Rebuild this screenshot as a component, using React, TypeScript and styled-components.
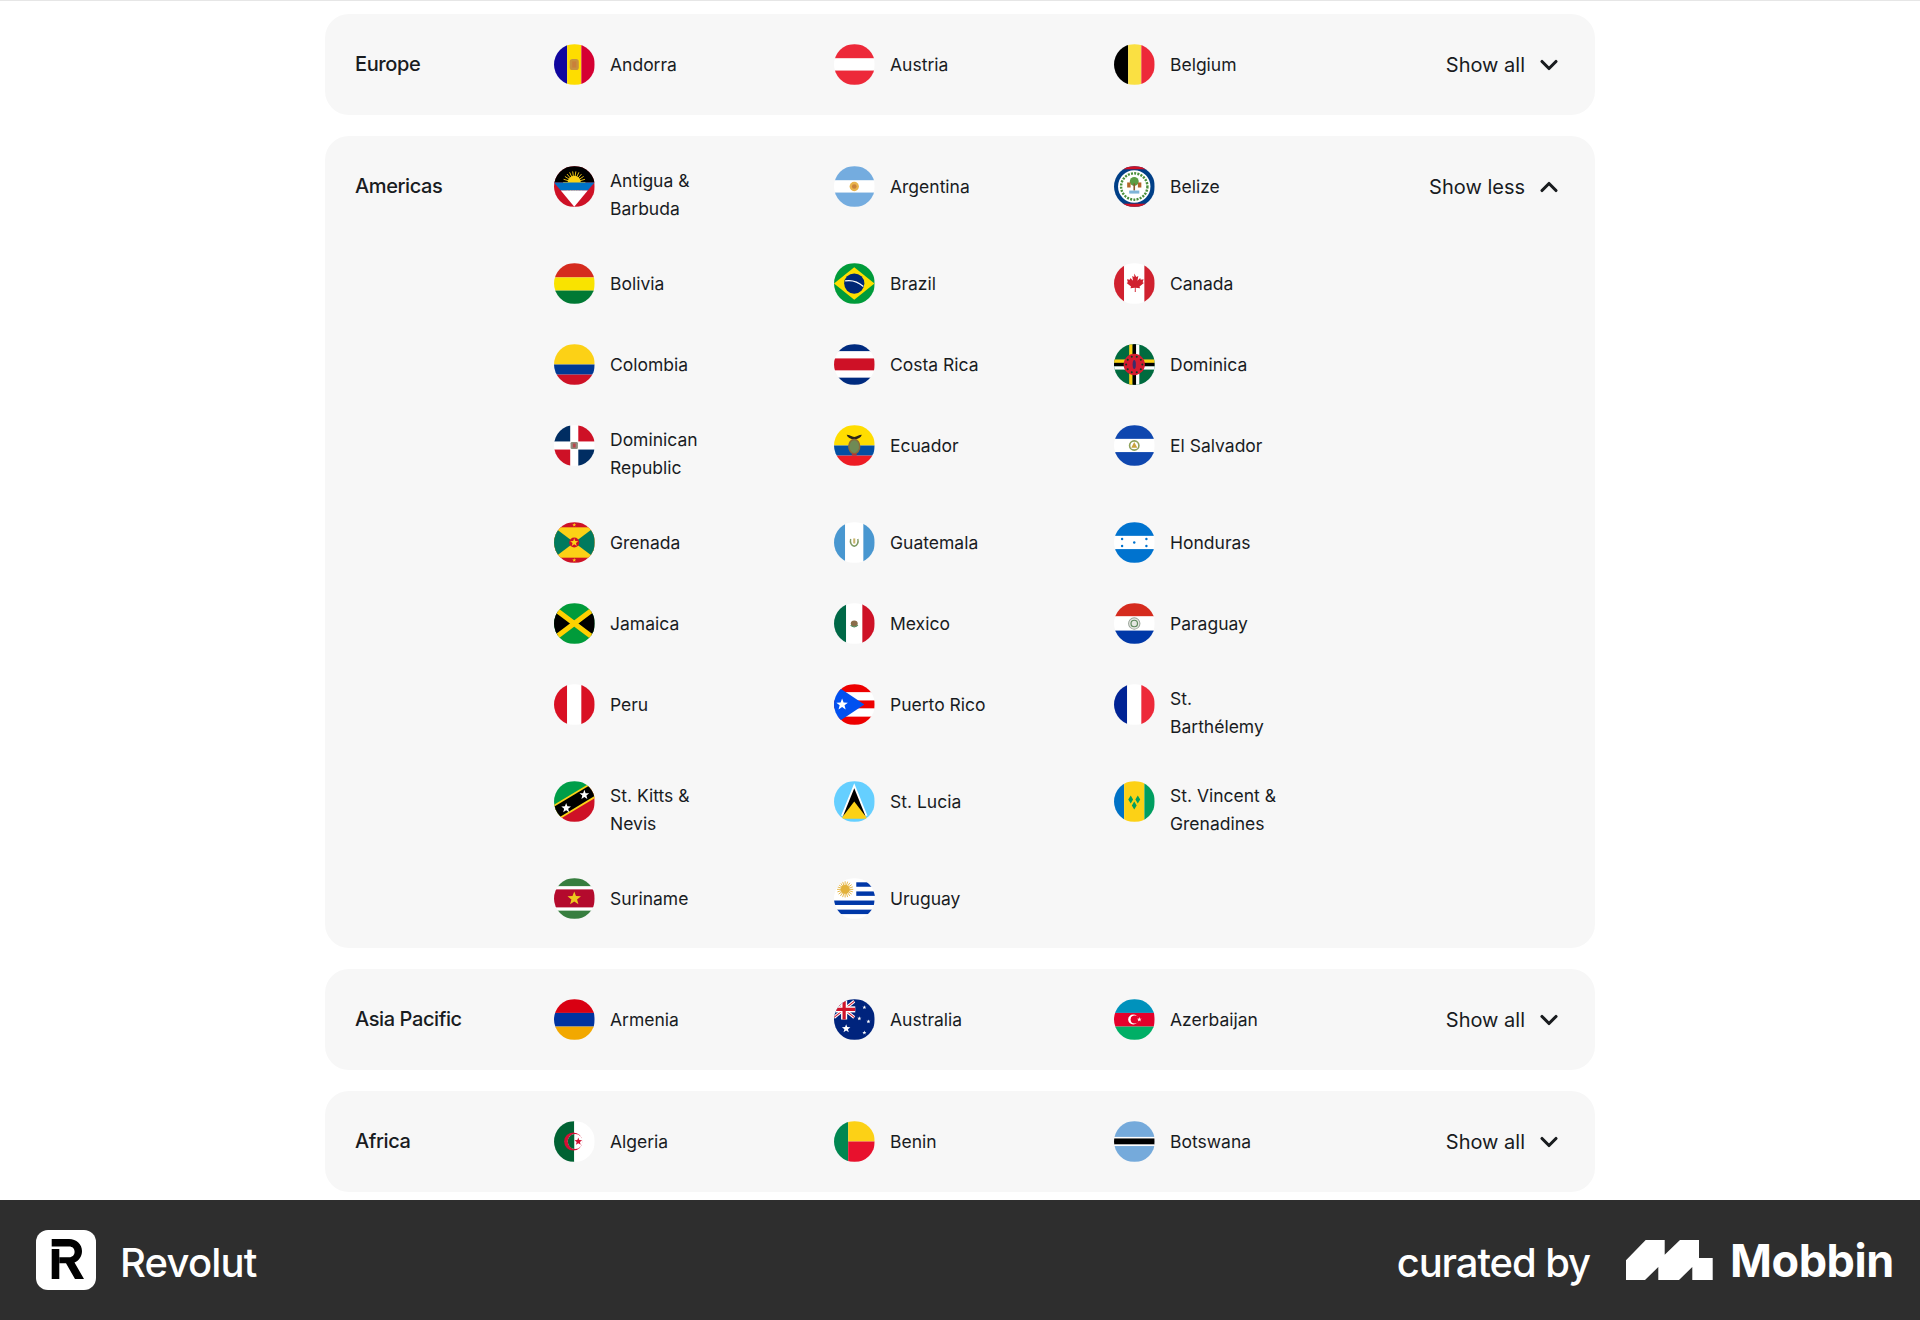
import React from "react";
import styled, { createGlobalStyle } from "styled-components";
import { ChevronDown, ChevronUp } from "lucide-react";

const star = (cx: number, cy: number, r: number, fill: string, inner = 0.42) => {
  const pts = Array.from({ length: 10 }).map((_, i) => {
    const a = (Math.PI / 5) * i - Math.PI / 2;
    const d = i % 2 === 0 ? r : r * inner;
    return `${(cx + Math.cos(a) * d).toFixed(2)},${(cy + Math.sin(a) * d).toFixed(2)}`;
  });
  return <polygon points={pts.join(" ")} fill={fill} />;
};

// stripes as [colour, size] pairs, sizes add up to 40
const hs = (list: [string, number][]) => {
  let y = 0;
  return list.map(([c, s], i) => {
    const r = <rect key={i} x="0" y={y} width="40" height={s} fill={c} />;
    y += s;
    return r;
  });
};
const vs = (list: [string, number][]) => {
  let x = 0;
  return list.map(([c, s], i) => {
    const r = <rect key={i} x={x} y="0" width={s} height="40" fill={c} />;
    x += s;
    return r;
  });
};

const sunRays = (cx: number, cy: number, r: number, fill: string, n = 16) =>
  Array.from({ length: n }).map((_, i) => {
    const a = ((Math.PI * 2) / n) * i;
    return (
      <line
        key={i}
        x1={cx}
        y1={cy}
        x2={cx + Math.cos(a) * r}
        y2={cy + Math.sin(a) * r}
        stroke={fill}
        strokeWidth="0.9"
      />
    );
  });

const FLAGS: Record<string, React.ReactNode> = {
  Andorra: (
    <>
      {vs([["#10069f", 13], ["#fedd00", 14], ["#d50032", 13]])}
      <rect x="15.5" y="14.5" width="9" height="11" rx="2.8" fill="#c7913f" />
      <rect x="18" y="17" width="4" height="6" fill="#c9803a" />
    </>
  ),
  Austria: hs([["#ed2939", 14], ["#fff", 12], ["#ed2939", 14]]),
  Belgium: vs([["#000", 14], ["#fae042", 13], ["#ed2939", 13]]),
  "Antigua & Barbuda": (
    <>
      <rect width="40" height="40" fill="#ce1126" />
      <rect width="40" height="16" fill="#000" />
      {sunRays(20, 16, 11, "#fcd116", 22)}
      <circle cx="20" cy="16" r="6.5" fill="#fcd116" />
      <polygon points="0,16 40,16 33.3,24 6.7,24" fill="#0072c6" />
      <polygon points="6.7,24 33.3,24 20,40" fill="#fff" />
    </>
  ),
  Argentina: (
    <>
      {hs([["#74acdf", 14], ["#fff", 12], ["#74acdf", 14]])}
      <circle cx="20" cy="20" r="4.6" fill="#e9b44c" />
      <circle cx="20" cy="20" r="2.3" fill="#c9833a" />
    </>
  ),
  Belize: (
    <>
      <rect width="40" height="40" fill="#003f87" />
      <rect width="40" height="3" fill="#ce1126" />
      <rect y="37" width="40" height="3" fill="#ce1126" />
      <circle cx="20" cy="20" r="16" fill="#fff" />
      <circle cx="20" cy="20" r="13" fill="none" stroke="#4b8f3c" strokeWidth="2.4" strokeDasharray="2 1.2" />
      <circle cx="20" cy="15" r="4.4" fill="#5c9e45" />
      <rect x="19.2" y="17" width="1.6" height="7" fill="#8a5a2b" />
      <rect x="13" y="16" width="3.4" height="5" fill="#b5652b" />
      <rect x="23.6" y="16" width="3.4" height="5" fill="#b5652b" />
      <rect x="15" y="24" width="10" height="3" fill="#7fb5d9" />
    </>
  ),
  Bolivia: hs([["#d52b1e", 14], ["#f9e300", 13], ["#007934", 13]]),
  Brazil: (
    <>
      <rect width="40" height="40" fill="#009b3a" />
      <polygon points="20,4 40,20 20,36 0,20" fill="#fedf00" />
      <circle cx="20" cy="20" r="10" fill="#002776" />
      <path d="M11 17.5C17 16.5 24 18.5 29 23" fill="none" stroke="#fff" strokeWidth="1.2" />
    </>
  ),
  Canada: (
    <>
      {vs([["#d0212f", 10], ["#fff", 20], ["#d0212f", 10]])}
      <path
        d="M20 10l2 3.6 2-1-.8 4.6 2.6-2.6.6 1.6 2.8-.5-.9 3 1.2.7-4.3 3.6.5 1.6-4.3-.5.1 4.3h-1l.1-4.3-4.3.5.5-1.6-4.3-3.6 1.2-.7-.9-3 2.8.5.6-1.6 2.6 2.6-.8-4.6 2 1z"
        fill="#d0212f"
      />
    </>
  ),
  Colombia: hs([["#fcd116", 20], ["#003893", 10], ["#ce1126", 10]]),
  "Costa Rica": hs([["#002b7f", 7], ["#fff", 7], ["#ce1126", 12], ["#fff", 7], ["#002b7f", 7]]),
  Dominica: (
    <>
      <rect width="40" height="40" fill="#006b3f" />
      {vs([["transparent", 15], ["#fcd116", 3.4], ["#000", 3.4], ["#fff", 3.2]])}
      {hs([["transparent", 15], ["#fcd116", 3.4], ["#000", 3.4], ["#fff", 3.2]])}
      <circle cx="20" cy="20" r="10.5" fill="#d41c30" />
      {Array.from({ length: 10 }).map((_, i) => {
        const a = (Math.PI / 5) * i;
        return <circle key={i} cx={20 + Math.cos(a) * 8} cy={20 + Math.sin(a) * 8} r="1" fill="#0b3b24" />;
      })}
      <ellipse cx="20" cy="20" rx="1.6" ry="4.5" fill="#3a2d6b" />
    </>
  ),
  "Dominican Republic": (
    <>
      <rect width="40" height="40" fill="#fff" />
      <rect width="16" height="16" fill="#002d62" />
      <rect x="24" width="16" height="16" fill="#ce1126" />
      <rect y="24" width="16" height="16" fill="#ce1126" />
      <rect x="24" y="24" width="16" height="16" fill="#002d62" />
      <rect x="16.4" y="16.5" width="7.2" height="7" rx="1.4" fill="#8f8d7e" />
      <rect x="18.6" y="18" width="2.8" height="4" fill="#b9464c" />
    </>
  ),
  Ecuador: (
    <>
      {hs([["#ffdd00", 20], ["#034ea2", 10], ["#ed1c24", 10]])}
      <path d="M12.5 9.5c3 .2 5 1.6 7.5 2.2 2.5-.6 4.5-2 7.5-2.2-1 2.8-3.5 4.4-7.5 4.8-4-.4-6.5-2-7.5-4.8z" fill="#2b2418" />
      <ellipse cx="20" cy="21" rx="5.4" ry="7" fill="#6f8a55" stroke="#8a6a3a" strokeWidth="1.4" />
      <rect x="17.6" y="28" width="4.8" height="2" fill="#b8352f" />
    </>
  ),
  "El Salvador": (
    <>
      {hs([["#0f47af", 13.5], ["#fff", 13], ["#0f47af", 13.5]])}
      <circle cx="20" cy="20" r="4.6" fill="none" stroke="#8ea25a" strokeWidth="1.6" />
      <polygon points="20,16.6 23,22.2 17,22.2" fill="#c9a43e" />
    </>
  ),
  Grenada: (
    <>
      <rect width="40" height="40" fill="#ce1126" />
      <rect y="5" width="40" height="30" fill="#fcd116" />
      <polygon points="0,5 20,20 0,35" fill="#007a5e" />
      <polygon points="40,5 20,20 40,35" fill="#007a5e" />
      <circle cx="20" cy="20" r="5" fill="#ce1126" />
      {star(20, 20, 4.2, "#fcd116")}
      {star(20, 2.6, 2, "#fcd116")}
      {star(20, 37.4, 2, "#fcd116")}
    </>
  ),
  Guatemala: (
    <>
      {vs([["#4997d0", 11], ["#fff", 18], ["#4997d0", 11]])}
      <path d="M16.5 16.5c-1 3.5.5 6.5 3.5 7.2 3-.7 4.5-3.7 3.5-7.2" fill="none" stroke="#7f9a63" strokeWidth="1.4" />
      <rect x="19" y="16" width="2" height="5" fill="#c9b26a" />
    </>
  ),
  Honduras: (
    <>
      {hs([["#0073cf", 13.5], ["#fff", 13], ["#0073cf", 13.5]])}
      {[[8, 16.5], [8, 23.5], [20, 20], [32, 16.5], [32, 23.5]].map(([x, y], i) => (
        <circle key={i} cx={x} cy={y} r="1.2" fill="#0073cf" />
      ))}
    </>
  ),
  Jamaica: (
    <>
      <rect width="40" height="40" fill="#009b3a" />
      <polygon points="0,5 16,20 0,35" fill="#000" />
      <polygon points="40,5 24,20 40,35" fill="#000" />
      <path d="M0 5L40 35M40 5L0 35" stroke="#fed100" strokeWidth="5" />
    </>
  ),
  Mexico: (
    <>
      {vs([["#006847", 12], ["#fff", 16], ["#ce1126", 12]])}
      <ellipse cx="20" cy="20" rx="3.4" ry="3" fill="#8a6d4a" />
      <path d="M16.5 21.5c1.5 2.4 5.5 2.4 7 0" fill="none" stroke="#4f8a5a" strokeWidth="1.3" />
    </>
  ),
  Paraguay: (
    <>
      {hs([["#d52b1e", 13], ["#fff", 14], ["#0038a8", 13]])}
      <circle cx="20" cy="20" r="5.6" fill="#e5e7e2" stroke="#9aa59a" strokeWidth="1" />
      <circle cx="20" cy="20" r="3.2" fill="none" stroke="#5f8a5f" strokeWidth="1.2" />
    </>
  ),
  Peru: vs([["#d91023", 13], ["#fff", 14], ["#d91023", 13]]),
  "Puerto Rico": (
    <>
      {hs([["#ed0000", 8], ["#fff", 8], ["#ed0000", 8], ["#fff", 8], ["#ed0000", 8]])}
      <polygon points="0,0 30,20 0,40" fill="#0050f0" />
      {star(8, 20, 6, "#fff")}
    </>
  ),
  "St. Barthélemy": vs([["#002395", 13], ["#fff", 14], ["#ed2939", 13]]),
  "St. Kitts & Nevis": (
    <>
      <polygon points="0,0 40,0 0,40" fill="#009e49" />
      <polygon points="40,0 40,40 0,40" fill="#ce1126" />
      <path d="M0 32L40 8" stroke="#fcd116" strokeWidth="15" />
      <path d="M0 32L40 8" stroke="#000" strokeWidth="11.5" />
      {star(12, 26.5, 5, "#fff")}
      {star(30, 13.5, 5, "#fff")}
    </>
  ),
  "St. Lucia": (
    <>
      <rect width="40" height="40" fill="#65cfff" />
      <polygon points="20,2 33,34 7,34" fill="#fff" />
      <polygon points="20,7 31,34 9,34" fill="#000" />
      <polygon points="20,20 33,37 7,37" fill="#fcd116" />
    </>
  ),
  "St. Vincent & Grenadines": (
    <>
      {vs([["#0072c6", 10], ["#fcd116", 20], ["#009e60", 10]])}
      {[[16.5, 18], [23.5, 18], [20, 24]].map(([x, y], i) => (
        <polygon key={i} points={`${x},${y - 4} ${x + 2.4},${y} ${x},${y + 4} ${x - 2.4},${y}`} fill="#009e60" />
      ))}
    </>
  ),
  Suriname: (
    <>
      {hs([["#377e3f", 8], ["#fff", 3], ["#b40a2d", 18], ["#fff", 3], ["#377e3f", 8]])}
      {star(20, 20, 7, "#ecc81d")}
    </>
  ),
  Uruguay: (
    <>
      <rect width="40" height="40" fill="#fff" />
      {[4, 13, 22, 31].map((y) => (
        <rect key={y} x={y < 20 ? 22 : 0} y={y} width="40" height="4.4" fill="#0038a8" />
      ))}
      {sunRays(11, 11, 8, "#e3b23c", 20)}
      <circle cx="11" cy="11" r="4.4" fill="#e3b23c" />
    </>
  ),
  Armenia: hs([["#d90012", 13.5], ["#0033a0", 13.5], ["#f2a800", 13]]),
  Australia: (
    <>
      <rect width="40" height="40" fill="#00247d" />
      <path d="M0 2L20 18M20 2L0 18" stroke="#fff" strokeWidth="3" />
      <path d="M0 2L20 18M20 2L0 18" stroke="#cf142b" strokeWidth="1" />
      <rect y="7" width="21" height="6" fill="#fff" />
      <rect x="7" width="6" height="20" fill="#fff" />
      <rect y="8.4" width="21" height="3.2" fill="#cf142b" />
      <rect x="8.4" width="3.2" height="20" fill="#cf142b" />
      {star(12, 29, 4.4, "#fff")}
      {star(30, 8, 2.1, "#fff")}
      {star(25, 19, 2.1, "#fff")}
      {star(34, 22, 2.1, "#fff")}
      {star(30, 33, 2.1, "#fff")}
    </>
  ),
  Azerbaijan: (
    <>
      {hs([["#0092bc", 13.5], ["#e4002b", 13.5], ["#00af66", 13]])}
      <circle cx="19" cy="20" r="5" fill="#fff" />
      <circle cx="20.4" cy="20" r="4" fill="#e4002b" />
      {star(25, 20, 2.4, "#fff")}
    </>
  ),
  Algeria: (
    <>
      {vs([["#006233", 20], ["#fff", 20]])}
      <circle cx="19" cy="20" r="9" fill="#d21034" />
      <circle cx="21" cy="20" r="7.4" fill="#fff" />
      <path d="M20 12.67A7.4 7.4 0 0 0 20 27.33Z" fill="#006233" />
      {star(24, 20, 4, "#d21034")}
    </>
  ),
  Benin: (
    <>
      <rect width="14" height="40" fill="#008751" />
      <rect x="14" width="26" height="20" fill="#fcd116" />
      <rect x="14" y="20" width="26" height="20" fill="#e8112d" />
    </>
  ),
  Botswana: hs([["#75aadb", 15.5], ["#fff", 1.5], ["#000", 6], ["#fff", 1.5], ["#75aadb", 15.5]]),
};

type Group = { name: string; expanded?: boolean; countries: string[] };

const GROUPS: Group[] = [
  { name: "Europe", countries: ["Andorra", "Austria", "Belgium"] },
  {
    name: "Americas",
    expanded: true,
    countries: [
      "Antigua & Barbuda",
      "Argentina",
      "Belize",
      "Bolivia",
      "Brazil",
      "Canada",
      "Colombia",
      "Costa Rica",
      "Dominica",
      "Dominican Republic",
      "Ecuador",
      "El Salvador",
      "Grenada",
      "Guatemala",
      "Honduras",
      "Jamaica",
      "Mexico",
      "Paraguay",
      "Peru",
      "Puerto Rico",
      "St. Barthélemy",
      "St. Kitts & Nevis",
      "St. Lucia",
      "St. Vincent & Grenadines",
      "Suriname",
      "Uruguay",
    ],
  },
  { name: "Asia Pacific", countries: ["Armenia", "Australia", "Azerbaijan"] },
  { name: "Africa", countries: ["Algeria", "Benin", "Botswana"] },
];

const App = () => {
  return (
    <>
      <GlobalStyle />
      <Page>
        <Regions>
          {GROUPS.map((group) => (
            <RegionCard key={group.name} $expanded={group.expanded}>
              <RegionName>{group.name}</RegionName>
              <CountryGrid>
                {group.countries.map((country) => (
                  <Country key={country}>
                    <Flag viewBox="0 0 40 40">{FLAGS[country]}</Flag>
                    <CountryName>
                      <span>{country}</span>
                    </CountryName>
                  </Country>
                ))}
              </CountryGrid>
              <Toggle>
                {group.expanded ? "Show less" : "Show all"}
                {group.expanded ? <ChevronUp size={28} strokeWidth={2.7} /> : <ChevronDown size={28} strokeWidth={2.7} />}
              </Toggle>
            </RegionCard>
          ))}
        </Regions>

        <Footer>
          <Brand>
            <AppIcon viewBox="0 0 60 60">
              <rect width="60" height="60" rx="12" fill="#fff" />
              <path
                d="M15.7 9H33C40.5 9 46 14 46 21C46 26.5 43 30.5 38.5 32.5L48 49H39L30 33.3H23.3V27.3H33C36.6 27.3 38.6 24.8 38.6 21.8C38.6 18.7 36.6 16.5 33 16.5H15.7Z"
                fill="#000"
              />
              <rect x="15.7" y="19" width="7.6" height="30" fill="#000" />
            </AppIcon>
            <BrandName>Revolut</BrandName>
          </Brand>
          <Curated>
            <CuratedBy>curated by</CuratedBy>
            <MobbinMark viewBox="0 0 87 40">
              <path
                d="M0 20.3L19.7 0H38.7V14.7L54 0H73V18H86.7V40H66.3V27L53 40H32.3V27L19 40H0Z"
                fill="#fff"
              />
            </MobbinMark>
            <MobbinName>Mobbin</MobbinName>
          </Curated>
        </Footer>
      </Page>
    </>
  );
};

export default App;

const GlobalStyle = createGlobalStyle`
  html, body {
    margin: 0;
    padding: 0;
    background: #fff;
  }
  body {
    font-family: Inter, "Liberation Sans", sans-serif;
    color: #191c1f;
  }
`;

const Page = styled.div`
  width: 1920px;
  height: 1320px;
  display: flex;
  flex-direction: column;
  border-top: 1px solid #e6e6e6;
  box-sizing: border-box;
`;

const Regions = styled.main`
  flex: 1;
  display: flex;
  flex-direction: column;
  gap: 21px;
  width: 1270px;
  margin: 0 auto;
  padding-top: 13px;
`;

const RegionCard = styled.section<{ $expanded?: boolean }>`
  display: grid;
  grid-template-columns: 199px 840px 1fr;
  align-items: start;
  padding: 30px 30px ${(p) => (p.$expanded ? "29px" : "30px")};
  border-radius: 24px;
  background: #f7f7f7;
`;

const RegionName = styled.h3`
  margin: 0;
  font-size: 20px;
  font-weight: 500;
  line-height: 41px;
  letter-spacing: -0.4px;
`;

const CountryGrid = styled.div`
  display: grid;
  grid-template-columns: repeat(3, 280px);
  row-gap: 40px;
  align-items: start;
`;

const Country = styled.div`
  display: flex;
  align-items: flex-start;
  gap: 15.5px;
`;

const Flag = styled.svg`
  flex: none;
  width: 40.5px;
  height: 41px;
  border-radius: 50%;
`;

const CountryName = styled.div`
  display: flex;
  align-items: center;
  min-height: 41px;
  max-width: 112px;
  font-size: 17.5px;
  line-height: 28px;

  span {
    display: block;
    padding-top: 1px;
  }
`;

const Toggle = styled.div`
  display: flex;
  align-items: center;
  justify-content: flex-end;
  gap: 10px;
  height: 41px;
  padding-right: 2px;
  font-size: 20px;
  white-space: nowrap;
`;

const Footer = styled.footer`
  flex: none;
  display: flex;
  align-items: center;
  justify-content: space-between;
  height: 120px;
  padding: 0 26px 0 36px;
  background: #2e2e2e;
  color: #fff;
`;

const Brand = styled.div`
  display: flex;
  align-items: center;
  gap: 24px;
`;

const AppIcon = styled.svg`
  width: 60px;
  height: 60px;
`;

const BrandName = styled.span`
  padding-top: 4px;
  font-size: 40px;
  font-weight: 500;
  letter-spacing: -0.8px;
`;

const Curated = styled.div`
  display: flex;
  align-items: center;
`;

const CuratedBy = styled.span`
  margin-right: 36px;
  padding-top: 4px;
  font-size: 40px;
  font-weight: 500;
  letter-spacing: -1.1px;
`;

const MobbinMark = styled.svg`
  width: 87px;
  height: 40px;
  margin-right: 17px;
`;

const MobbinName = styled.span`
  font-size: 45px;
  font-weight: 700;
  letter-spacing: -0.4px;
`;
